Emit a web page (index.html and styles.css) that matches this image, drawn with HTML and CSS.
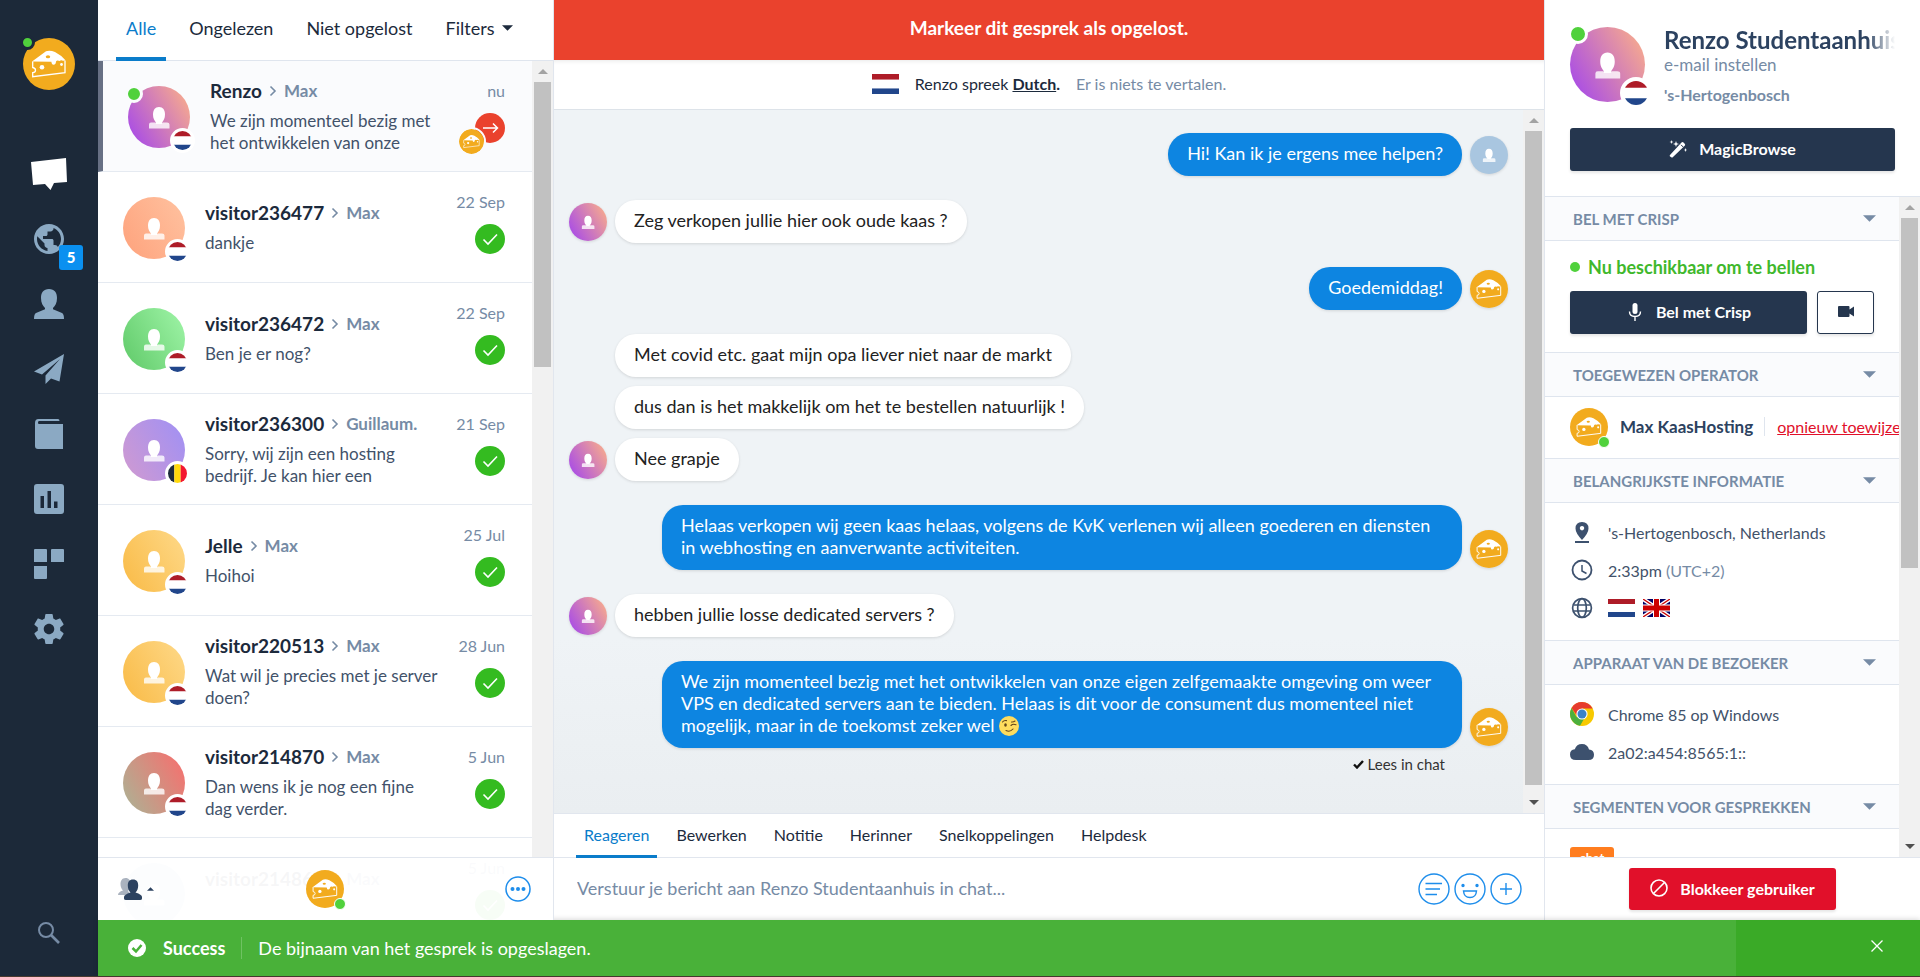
FILE: index.html
```html
<!DOCTYPE html>
<html lang="nl">
<head>
    <meta charset="UTF-8">
    <meta name="viewport" content="width=device-width, initial-scale=1.0">
    <title>Inbox</title>
    <link rel="stylesheet" href="styles.css">
</head>
<body>
    <!-- shared icons -->
    <svg class="sprite" aria-hidden="true">
        <symbol id="i-cheese" viewBox="0 0 52 52">
            <circle cx="26" cy="26" r="26" fill="#f2ab1e"/>
            <path d="M9 23.5 23 13.2Q27 11.800 32 14 38 17 42.700 22.500L40 22.700Q38 21.500 36.500 23 34 22 33 23.500 32.800 26.800 30.500 26.800 28.600 26.800 28.400 23.800z" fill="#fff"/>
            <path d="M9.700 23.400V29.500Q12.500 30 12.500 32.200 12.500 34.400 9.700 34.600V38.700L42 34.700V22.800" fill="none" stroke="#fff" stroke-width="1.300"/>
            <ellipse cx="25" cy="18.800" rx="2.200" ry="1.500" fill="#f2ab1e"/>
            <circle cx="19" cy="29.300" r="2.300" fill="#fff"/>
            <circle cx="38.500" cy="26.500" r="1.400" fill="#fff"/>
        </symbol>
        <symbol id="i-person" viewBox="0 0 62 62">
            <path d="M31 21c4 0 6 3 6 7.500 0 4-1.500 6-3 8v1.500h-6V36.500c-1.500-2-3-4-3-8C25 24 27 21 31 21z" fill="#fff"/>
            <path d="M21 42.500V38.500Q21 36.500 23 36.500H27.500Q31 39 34.500 36.500H39Q41.500 36.500 41.500 38.500V42.500z" fill="#fff" opacity=".8"/>
        </symbol>
        <symbol id="i-nl" viewBox="0 0 27 18" preserveAspectRatio="none">
            <path d="M0 0h27v18H0z" fill="#fff"/><path d="M0 0h27v5H0z" fill="#ae1c28"/><path d="M0 13h27v5H0z" fill="#21468b"/>
        </symbol>
        <symbol id="i-be" viewBox="0 0 27 18" preserveAspectRatio="none">
            <path d="M0 0h9v18H0z"/><path d="M9 0h9v18H9z" fill="#ffd90c"/><path d="M18 0h9v18h-9z" fill="#f31830"/>
        </symbol>
        <symbol id="i-check" viewBox="0 0 30 30">
            <circle cx="15" cy="15" r="15" fill="#34bb20"/>
            <path d="M8.500 15.500 13 20 22 10.500" fill="none" stroke="#fff" stroke-width="1.600"/>
        </symbol>
        <symbol id="i-caret" viewBox="0 0 12 6"><path d="M0 0h12L6 6z" fill="currentColor"/></symbol>
        <symbol id="i-gt" viewBox="0 0 8 12"><path d="M1.500 1.500 6 6 1.500 10.500" fill="none" stroke="currentColor" stroke-width="1.600"/></symbol>
    </svg>

    <div class="app">
        <nav class="sidebar">
            <a href="#" class="me" aria-label="Account">
                <svg><use href="#i-cheese"/></svg>
                <span class="dot"></span>
            </a>
            <ul class="menu">
                <li><a href="#" class="active" aria-label="Inbox"><svg viewBox="0 0 36 32"><path d="M0 4 35 0 36 24 23 25 19.500 32 14 26 2 27z"/></svg></a></li>
                <li><a href="#" aria-label="Bezoekers"><svg viewBox="2 2 20 20"><path d="M12 2C6.480 2 2 6.480 2 12s4.480 10 10 10 10-4.480 10-10S17.520 2 12 2zm-1 17.930c-3.950-.49-7-3.850-7-7.930 0-.62.080-1.210.21-1.790L9 15v1c0 1.100.9 2 2 2v1.930zm6.900-2.540c-.26-.81-1-1.390-1.900-1.390h-1v-3c0-.55-.45-1-1-1H8v-2h2c.55 0 1-.45 1-1V7h2c1.100 0 2-.9 2-2v-.41c2.930 1.190 5 4.060 5 7.410 0 2.080-.8 3.970-2.100 5.390z"/></svg><span class="badge">5</span></a></li>
                <li><a href="#" aria-label="Contacten"><svg viewBox="0 0 30 30"><path d="M15 0c5.500 0 8 3.500 8 9 0 5-2 8-4 10v1.200L28 24q2 1 2 6H0q0-5 2-6l9-3.800V19c-2-2-4-5-4-10 0-5.500 2.500-9 8-9z"/></svg></a></li>
                <li><a href="#" aria-label="Campagnes"><svg viewBox="0 0 30 30"><path d="M30 0 25.500 27.500 17 24.500 11.500 30V21.500L26 5 8 20.500 0 17.500z"/></svg></a></li>
                <li><a href="#" aria-label="Helpdesk"><svg viewBox="0 0 30 30"><path d="M4.500 0H24q1.500 0 1.500 2H5q-1 0-1 1.500T5 5H29V30H4Q1 30 1 27V4Q1 0 4.500 0z"/></svg></a></li>
                <li><a href="#" aria-label="Statistieken"><svg viewBox="0 0 30 30"><path fill-rule="evenodd" d="M3 0H27Q30 0 30 3V27Q30 30 27 30H3Q0 30 0 27V3Q0 0 3 0zM6.500 12V24H10V12zM13.500 7V24H17V7zM20 17.500V24H23.500V17.500z"/></svg></a></li>
                <li><a href="#" aria-label="Plugins"><svg viewBox="0 0 30 30"><path d="M1 0h11q1 0 1 1v12H0V1q0-1 1-1zM18 0h11q1 0 1 1v12H17V1q0-1 1-1zM0 17h13v12q0 1-1 1H1q-1 0-1-1z"/></svg></a></li>
                <li><a href="#" aria-label="Instellingen"><svg viewBox="2 2 20 20"><path d="M19.430 12.980c.04-.32.070-.64.070-.98s-.03-.66-.07-.98l2.110-1.650c.19-.15.24-.42.120-.64l-2-3.460c-.12-.22-.39-.3-.61-.22l-2.490 1c-.52-.4-1.080-.73-1.690-.98l-.38-2.650C14.460 2.180 14.250 2 14 2h-4c-.25 0-.46.18-.49.42l-.38 2.650c-.61.25-1.170.59-1.690.98l-2.490-1c-.23-.09-.49 0-.61.22l-2 3.460c-.13.22-.07.49.12.64l2.110 1.650c-.04.32-.07.65-.07.98s.03.66.07.98l-2.110 1.650c-.19.15-.24.42-.12.64l2 3.460c.12.22.39.3.61.22l2.490-1c.52.4 1.080.73 1.690.98l.38 2.650c.03.24.24.42.49.42h4c.25 0 .46-.18.49-.42l.38-2.650c.61-.25 1.170-.59 1.690-.98l2.490 1c.23.09.49 0 .61-.22l2-3.460c.12-.22.070-.49-.12-.64l-2.110-1.650zM12 15.500c-1.930 0-3.500-1.570-3.500-3.500s1.570-3.500 3.500-3.500 3.500 1.570 3.500 3.500-1.570 3.500-3.500 3.500z"/></svg></a></li>
            </ul>
            <a href="#" class="search" aria-label="Zoeken"><svg viewBox="0 0 22 22"><circle cx="8" cy="8" r="7" fill="none" stroke="currentColor" stroke-width="2"/><path d="M13 13 21 21" stroke="currentColor" stroke-width="2.600"/></svg></a>
        </nav>

        <div class="content">
            <section class="inbox">
                <div class="filters">
                    <a href="#" class="active">Alle</a>
                    <a href="#">Ongelezen</a>
                    <a href="#">Niet opgelost</a>
                    <a href="#">Filters <svg class="caret"><use href="#i-caret"/></svg></a>
                </div>
                <div class="scroll-area">
                    <ul class="conversations">
                        <li class="conversation selected">
                            <div class="avatar renzo"><svg><use href="#i-person"/></svg><span class="dot"></span><svg class="flag"><use href="#i-nl"/></svg></div>
                            <div class="preview">
                                <h3>Renzo <svg><use href="#i-gt"/></svg> <span>Max</span></h3>
                                <p>We zijn momenteel bezig met het ontwikkelen van onze</p>
                            </div>
                            <div class="meta">
                                <time>nu</time>
                                <div class="pending">
                                    <svg class="state" viewBox="0 0 30 30"><circle cx="15" cy="15" r="15" fill="#ea422d"/><path d="M8 15H22M18 10.500 22.500 15 18 19.500" fill="none" stroke="#fff" stroke-width="1.500"/></svg>
                                    <svg class="operator"><use href="#i-cheese"/></svg>
                                </div>
                            </div>
                        </li>
                        <li class="conversation">
                            <div class="avatar peach"><svg><use href="#i-person"/></svg><svg class="flag"><use href="#i-nl"/></svg></div>
                            <div class="preview">
                                <h3>visitor236477 <svg><use href="#i-gt"/></svg> <span>Max</span></h3>
                                <p>dankje</p>
                            </div>
                            <div class="meta"><time>22 Sep</time><svg class="state"><use href="#i-check"/></svg></div>
                        </li>
                        <li class="conversation">
                            <div class="avatar green"><svg><use href="#i-person"/></svg><svg class="flag"><use href="#i-nl"/></svg></div>
                            <div class="preview">
                                <h3>visitor236472 <svg><use href="#i-gt"/></svg> <span>Max</span></h3>
                                <p>Ben je er nog?</p>
                            </div>
                            <div class="meta"><time>22 Sep</time><svg class="state"><use href="#i-check"/></svg></div>
                        </li>
                        <li class="conversation">
                            <div class="avatar purple"><svg><use href="#i-person"/></svg><svg class="flag"><use href="#i-be"/></svg></div>
                            <div class="preview">
                                <h3>visitor236300 <svg><use href="#i-gt"/></svg> <span>Guillaum.</span></h3>
                                <p>Sorry, wij zijn een hosting bedrijf. Je kan hier een</p>
                            </div>
                            <div class="meta"><time>21 Sep</time><svg class="state"><use href="#i-check"/></svg></div>
                        </li>
                        <li class="conversation">
                            <div class="avatar yellow"><svg><use href="#i-person"/></svg><svg class="flag"><use href="#i-nl"/></svg></div>
                            <div class="preview">
                                <h3>Jelle <svg><use href="#i-gt"/></svg> <span>Max</span></h3>
                                <p>Hoihoi</p>
                            </div>
                            <div class="meta"><time>25 Jul</time><svg class="state"><use href="#i-check"/></svg></div>
                        </li>
                        <li class="conversation">
                            <div class="avatar yellow"><svg><use href="#i-person"/></svg><svg class="flag"><use href="#i-nl"/></svg></div>
                            <div class="preview">
                                <h3>visitor220513 <svg><use href="#i-gt"/></svg> <span>Max</span></h3>
                                <p>Wat wil je precies met je server doen?</p>
                            </div>
                            <div class="meta"><time>28 Jun</time><svg class="state"><use href="#i-check"/></svg></div>
                        </li>
                        <li class="conversation">
                            <div class="avatar red"><svg><use href="#i-person"/></svg><svg class="flag"><use href="#i-nl"/></svg></div>
                            <div class="preview">
                                <h3>visitor214870 <svg><use href="#i-gt"/></svg> <span>Max</span></h3>
                                <p>Dan wens ik je nog een fijne dag verder.</p>
                            </div>
                            <div class="meta"><time>5 Jun</time><svg class="state"><use href="#i-check"/></svg></div>
                        </li>
                        <li class="conversation">
                            <div class="avatar blue"><svg><use href="#i-person"/></svg></div>
                            <div class="preview">
                                <h3>visitor214867 <svg><use href="#i-gt"/></svg> <span>Max</span></h3>
                                <p>&nbsp;</p>
                            </div>
                            <div class="meta"><time>5 Jun</time><svg class="state"><use href="#i-check"/></svg></div>
                        </li>
                    </ul>
                    <div class="scrollbar inbox-bar"><i class="up"></i><div class="thumb"></div></div>
                </div>
                <footer class="inbox-footer">
                    <button type="button" class="people" aria-label="Operators">
                        <svg viewBox="0 0 24 22"><path d="M7.500 0c3.500 0 5 2.500 5 6s-1 5.500-2.500 7l3 4H0q0-3 5-4.500C3.500 11 2.500 9 2.500 6s1.500-6 5-6z" opacity=".4"/><path d="M15 1.500c3.700 0 5.200 2.300 5.200 6 0 3.300-1.200 5.500-2.700 7Q24 16.500 24 19v1.500Q24 22 22 22H8q-2 0-2-1.500V19q0-2.500 6.500-4.500c-1.500-1.500-2.700-3.700-2.700-7 0-3.700 1.500-6 5.200-6z"/></svg>
                        <svg class="caret-up"><use href="#i-caret"/></svg>
                    </button>
                    <div class="op-avatar"><svg><use href="#i-cheese"/></svg><span class="dot"></span></div>
                    <button type="button" class="more" aria-label="Meer">
                        <svg viewBox="0 0 26 26"><circle cx="13" cy="13" r="12" fill="none" stroke="currentColor" stroke-width="1.500"/><circle cx="7.500" cy="13" r="2"/><circle cx="13" cy="13" r="2"/><circle cx="18.500" cy="13" r="2"/></svg>
                    </button>
                </footer>
            </section>

            <main class="chat">
                <button type="button" class="resolve">Markeer dit gesprek als opgelost.</button>
                <div class="language">
                    <svg><use href="#i-nl"/></svg>
                    <p>Renzo spreek <a href="#">Dutch</a><b>.</b></p>
                    <p class="muted">Er is niets te vertalen.</p>
                </div>
                <div class="scroll-area">
                    <div class="messages">
                        <div class="message out"><p>Hi! Kan ik je ergens mee helpen?</p><div class="face grey"><svg><use href="#i-person"/></svg></div></div>
                        <div class="message in"><div class="face renzo"><svg><use href="#i-person"/></svg></div><p>Zeg verkopen jullie hier ook oude kaas ?</p></div>
                        <div class="message out"><p>Goedemiddag!</p><div class="face"><svg><use href="#i-cheese"/></svg></div></div>
                        <div class="group">
                            <div class="message in"><div class="face none"></div><p>Met covid etc. gaat mijn opa liever niet naar de markt</p></div>
                            <div class="message in"><div class="face none"></div><p>dus dan is het makkelijk om het te bestellen natuurlijk !</p></div>
                            <div class="message in"><div class="face renzo"><svg><use href="#i-person"/></svg></div><p>Nee grapje</p></div>
                        </div>
                        <div class="message out"><p>Helaas verkopen wij geen kaas helaas, volgens de KvK verlenen wij alleen goederen en diensten in webhosting en aanverwante activiteiten.</p><div class="face"><svg><use href="#i-cheese"/></svg></div></div>
                        <div class="message in"><div class="face renzo"><svg><use href="#i-person"/></svg></div><p>hebben jullie losse dedicated servers ?</p></div>
                        <div class="message out"><p>We zijn momenteel bezig met het ontwikkelen van onze eigen zelfgemaakte omgeving om weer VPS en dedicated servers aan te bieden. Helaas is dit voor de consument dus momenteel niet mogelijk, maar in de toekomst zeker wel <svg class="emoji" viewBox="0 0 20 20" role="img" aria-label="knipoog"><circle cx="10" cy="10" r="10" fill="#ffdc5d"/><ellipse cx="6.500" cy="9" rx="1.300" ry="1.800" fill="#65471b"/><path d="M12 9.500Q14 7.500 17 8.800M3.500 6Q5 4 7.500 4.600M12.500 6Q14.500 6.200 16 5M7 14.500Q11 16.500 14 13" fill="none" stroke="#65471b" stroke-width="1.100" stroke-linecap="round"/></svg></p><div class="face"><svg><use href="#i-cheese"/></svg></div></div>
                        <div class="receipt"><svg viewBox="0 0 11 9"><path d="M1 4.500 4 7.500 10 1" fill="none" stroke="currentColor" stroke-width="2.400"/></svg> Lees in chat</div>
                    </div>
                    <div class="scrollbar chat-bar"><i class="up"></i><div class="thumb"></div><i class="down"></i></div>
                </div>
                <div class="reply-tabs">
                    <a href="#" class="active">Reageren</a>
                    <a href="#">Bewerken</a>
                    <a href="#">Notitie</a>
                    <a href="#">Herinner</a>
                    <a href="#">Snelkoppelingen</a>
                    <a href="#">Helpdesk</a>
                </div>
                <form class="composer">
                    <input type="text" aria-label="Bericht" placeholder="Verstuur je bericht aan Renzo Studentaanhuis in chat...">
                    <button type="button" aria-label="Snelkoppelingen"><svg viewBox="0 0 32 32"><circle cx="16" cy="16" r="15"/><path d="M7.500 10.500H24M7.500 16H22M7.500 21.500H19" /></svg></button>
                    <button type="button" aria-label="Emoji"><svg viewBox="0 0 32 32"><circle cx="16" cy="16" r="15"/><path d="M9.500 18H22.500Q22 24.500 16 24.500T9.500 18z"/><circle cx="9" cy="12.500" r="1" fill="currentColor"/><circle cx="23" cy="12.500" r="1" fill="currentColor"/></svg></button>
                    <button type="button" aria-label="Bestand"><svg viewBox="0 0 32 32"><circle cx="16" cy="16" r="15"/><path d="M10 16H22M16 10V22"/></svg></button>
                </form>
            </main>

            <aside class="profile">
                <header class="visitor">
                    <div class="who">
                        <div class="avatar large renzo"><svg><use href="#i-person"/></svg><span class="dot"></span><svg class="flag"><use href="#i-nl"/></svg></div>
                        <div class="who-text">
                            <h2>Renzo Studentaanhuis</h2>
                            <p>e-mail instellen</p>
                            <p class="city">'s-Hertogenbosch</p>
                        </div>
                    </div>
                    <button type="button" class="btn dark">
                        <svg viewBox="0 0 18 18"><path d="M1 15 12.500 2.500Q13.500 1.500 14.500 2.500L15.700 3.700Q16.700 4.700 15.700 5.700L4 17Q3 18 2 17L1 16.500Q.3 15.700 1 15z"/><path d="M12 4.800 14.200 7" stroke="#25364e" stroke-width="1"/><path d="M7 1 7.800 3.200 10 4 7.800 4.800 7 7 6.200 4.800 4 4 6.200 3.200zM2.500 0 3 1.500 4.500 2 3 2.500 2.500 4 2 2.500.5 2 2 1.500zM16.500 8 17 9.500 18 10 17 10.500 16.500 12 16 10.500 15 10 16 9.500z"/></svg>
                        MagicBrowse
                    </button>
                </header>
                <div class="scroll-area">
                    <div class="details">
                        <h4>BEL MET CRISP <svg><use href="#i-caret"/></svg></h4>
                        <div class="panel call">
                            <p class="available"><span class="dot"></span>Nu beschikbaar om te bellen</p>
                            <div class="call-buttons">
                                <button type="button" class="btn dark"><svg viewBox="0 0 18 18"><rect x="6.500" y="0" width="5" height="11" rx="2.500"/><path d="M3.500 8.500Q3.500 13.500 9 13.500T14.500 8.500M9 13.500V18" fill="none" stroke="currentColor" stroke-width="1.400"/></svg> Bel met Crisp</button>
                                <button type="button" class="btn outline" aria-label="Video"><svg viewBox="0 0 16 11"><path d="M1 0h9.500q1 0 1 1v2.500L16 .5v10L11.500 7.500V10q0 1-1 1H1q-1 0-1-1V1q0-1 1-1z"/></svg></button>
                            </div>
                        </div>
                        <h4>TOEGEWEZEN OPERATOR <svg><use href="#i-caret"/></svg></h4>
                        <div class="panel assigned">
                            <div class="op-avatar"><svg><use href="#i-cheese"/></svg><span class="dot"></span></div>
                            <b>Max KaasHosting</b>
                            <a href="#">opnieuw toewijzen</a>
                        </div>
                        <h4>BELANGRIJKSTE INFORMATIE <svg><use href="#i-caret"/></svg></h4>
                        <ul class="panel info">
                            <li><svg viewBox="0 0 24 24"><path fill-rule="evenodd" d="M12 2q6.500 0 6.500 6.500Q18.500 13 12 20 5.500 13 5.500 8.500 5.500 2 12 2zM12 6a2.200 2.200 0 1 0 .01 0zM5 21h14v2H5z"/></svg>'s-Hertogenbosch, Netherlands</li>
                            <li><svg viewBox="0 0 24 24"><circle cx="12" cy="12" r="9.500" fill="none" stroke="currentColor" stroke-width="1.800"/><path d="M12 7V13L16.500 15.500" fill="none" stroke="currentColor" stroke-width="1.500"/></svg>2:33pm <span>(UTC+2)</span></li>
                            <li><svg viewBox="0 0 24 24"><g fill="none" stroke="currentColor" stroke-width="1.700"><circle cx="12" cy="12" r="9.400"/><ellipse cx="12" cy="12" rx="4.300" ry="9.400"/><path d="M3.500 9H20.500M3.500 15H20.500"/></g></svg>
                                <svg class="lang"><use href="#i-nl"/></svg>
                                <svg class="lang" viewBox="0 0 27 18" preserveAspectRatio="none"><path d="M0 0h27v18H0z" fill="#006"/><path d="M0 0 27 18M27 0 0 18" stroke="#fff" stroke-width="4"/><path d="M0 0 27 18M27 0 0 18" stroke="#c00" stroke-width="1.300"/><path d="M13.500 0V18M0 9H27" stroke="#fff" stroke-width="7"/><path d="M13.500 0V18M0 9H27" stroke="#c00" stroke-width="5"/></svg>
                            </li>
                        </ul>
                        <h4>APPARAAT VAN DE BEZOEKER <svg><use href="#i-caret"/></svg></h4>
                        <ul class="panel info device">
                            <li><svg viewBox="0 0 24 24"><circle cx="12" cy="12" r="12" fill="#f7c900"/><path d="M12 12 6.500 15 1.600 6A12 12 0 0 0 10 23.800L16 13.500z" fill="#4caf3d"/><path d="M12 12 6.500 13 1.600 6A12 12 0 0 1 22.600 6.500H12z" fill="#e63b2e"/><circle cx="12" cy="12" r="5.600" fill="#fff"/><circle cx="12" cy="12" r="4.500" fill="#3b82c9"/></svg>Chrome 85 op Windows</li>
                            <li><svg viewBox="0 0 24 24"><path d="M6 20Q0 20 0 14.500 0 9.800 4.800 9.300 6.500 4 12 4q5.500 0 7 5.500 5 .5 5 5.300 0 5.200-5.500 5.200z"/></svg>2a02:a454:8565:1::</li>
                        </ul>
                        <h4>SEGMENTEN VOOR GESPREKKEN <svg><use href="#i-caret"/></svg></h4>
                        <div class="panel segments"><span class="tag">chat</span></div>
                    </div>
                    <div class="scrollbar profile-bar"><i class="up"></i><div class="thumb"></div><i class="down"></i></div>
                </div>
                <footer class="block">
                    <button type="button" class="btn red"><svg viewBox="0 0 18 18"><g fill="none" stroke="currentColor" stroke-width="1.600"><circle cx="9" cy="9" r="8"/><path d="M3.500 14.500 14.500 3.500"/></g></svg> Blokkeer gebruiker</button>
                </footer>
            </aside>
        </div>

        <div class="toast" role="status">
            <svg class="ok" viewBox="0 0 18 18"><circle cx="9" cy="9" r="9" fill="#fff"/><path d="M4.500 9 8 12.500 13.500 6" fill="none" stroke="#49b139" stroke-width="2.500"/></svg>
            <strong>Success</strong>
            <span>De bijnaam van het gesprek is opgeslagen.</span>
            <button type="button" aria-label="Sluiten"><svg viewBox="0 0 12 12"><path d="M.5.5 11.500 11.500M11.500.5.5 11.500" stroke="currentColor" stroke-width="1.300"/></svg></button>
        </div>
    </div>
</body>
</html>
```

FILE: styles.css
```css
* {
    box-sizing: border-box;
}
body {
    margin: 0;
    background: #4a3a30;
    font-family: Lato, "Liberation Sans", sans-serif;
    font-size: 17px;
    color: #1c2a3c;
}
h2, h3, h4, p, ul {
    margin: 0;
    padding: 0;
    list-style: none;
}
a {
    color: inherit;
    text-decoration: none;
}
button, input {
    font-family: inherit;
    border: none;
    background: none;
    padding: 0;
}
button {
    cursor: pointer;
}
svg {
    display: block;
    flex-shrink: 0;
    fill: currentColor;
}
.sprite {
    position: absolute;
    width: 0;
    height: 0;
}

/* layout */
.app {
    display: grid;
    grid-template-columns: 98px 1fr;
    grid-template-rows: minmax(0, 1fr) 56px;
    height: 100vh;
    padding-bottom: 1px;
    overflow: hidden;
}
.content {
    display: grid;
    grid-template-columns: 456px minmax(0, 1fr) 376px;
    grid-template-rows: minmax(0, 1fr);
    background: #ffffff;
}
.scroll-area {
    display: flex;
    flex: 1;
    min-height: 0;
    overflow: hidden;
}
.dot {
    display: block;
    background: #50d13c;
    border-radius: 50%;
}

/* scrollbars */
.scrollbar {
    display: flex;
    flex-direction: column;
    align-items: center;
    flex: 0 0 21px;
    background: #f1f1f1;
}
.scrollbar i {
    height: 21px;
    flex-shrink: 0;
    display: flex;
    align-items: center;
}
.scrollbar i::before {
    content: "";
    border: 5px solid transparent;
    border-top: 0;
    border-bottom-color: #a3a3a3;
}
.scrollbar .down {
    margin-top: auto;
}
.scrollbar .down::before {
    border-top: 5px solid #505050;
    border-bottom: 0;
}
.thumb {
    width: 17px;
    background: #c1c1c1;
}
.inbox-bar .thumb {
    height: 285px;
}
.chat-bar .thumb {
    flex: 1;
    margin-bottom: 7px;
}
.profile-bar .thumb {
    height: 53%;
}

/* sidebar */
.sidebar {
    grid-row: 1 / 3;
    display: flex;
    flex-direction: column;
    align-items: center;
    background: #1c2939;
    padding: 38px 0 32px;
}
.me {
    position: relative;
    margin-bottom: 51px;
}
.me svg {
    width: 52px;
    height: 52px;
}
.me .dot {
    position: absolute;
    top: -3px;
    left: -3px;
    width: 15px;
    height: 15px;
    border: 3px solid #1c2939;
}
.menu a {
    position: relative;
    display: flex;
    align-items: center;
    justify-content: center;
    width: 98px;
    height: 65px;
    color: #8ba9c3;
}
.menu svg {
    width: 30px;
    height: 30px;
}
.menu .active {
    color: #ffffff;
}
.menu .active svg {
    width: 36px;
    height: 32px;
}
.badge {
    position: absolute;
    left: 59px;
    top: 39px;
    width: 24px;
    height: 25px;
    border-radius: 3px;
    background: #0a90f0;
    color: #ffffff;
    font-size: 15px;
    font-weight: 900;
    line-height: 25px;
    text-align: center;
}
.search {
    margin-top: auto;
    color: #768ba5;
}
.search svg {
    width: 22px;
    height: 22px;
}

/* avatars */
.avatar {
    position: relative;
    width: 62px;
    height: 62px;
    border-radius: 50%;
    flex-shrink: 0;
}
.avatar svg {
    width: 100%;
    height: 100%;
}
.avatar .dot {
    position: absolute;
    top: -1px;
    left: -3px;
    width: 18px;
    height: 18px;
    border: 3px solid #fafbfd;
}
.avatar .flag {
    position: absolute;
    right: -5px;
    bottom: -5px;
    width: 25px;
    height: 25px;
    border: 3px solid #ffffff;
    border-radius: 50%;
    background: #ffffff;
}
.avatar.large {
    width: 75px;
    height: 75px;
}
.large .flag {
    width: 32px;
    height: 32px;
    border-width: 4px;
    right: -7px;
    bottom: -7px;
}
.large .dot {
    width: 20px;
    height: 20px;
    top: -3px;
    left: -2px;
    border-color: #ffffff;
}
.renzo {
    background: linear-gradient(60deg, #a548ea 5%, #f5a890 90%);
}
.peach {
    background: linear-gradient(60deg, #fea27c, #ffc2a0);
}
.green {
    background: linear-gradient(60deg, #5fc968, #a0f5a8);
}
.purple {
    background: linear-gradient(60deg, #d19ad0, #9f90f5);
}
.yellow {
    background: linear-gradient(60deg, #f9ba45, #fed989);
}
.avatar.red {
    background: linear-gradient(60deg, #a9b596, #fa6c6c);
}
.blue {
    background: #a9c6e0;
}

/* inbox */
.inbox {
    position: relative;
    display: flex;
    flex-direction: column;
    min-height: 0;
    border-right: 1px solid #e1e6ee;
}
.filters {
    display: flex;
    gap: 13px;
    height: 61px;
    padding-left: 18px;
    border-bottom: 1px solid #dfe5ee;
    font-size: 18px;
    flex-shrink: 0;
}
.filters a {
    display: flex;
    align-items: center;
    gap: 7px;
    height: 61px;
    padding: 0 10px 2px;
    border-bottom: 4px solid transparent;
}
.filters .active {
    color: #0a7cca;
    border-color: #0a7cca;
}
.caret {
    width: 11px;
    height: 6px;
}
.conversations {
    flex: 1;
    min-width: 0;
}
.conversation {
    display: flex;
    align-items: center;
    height: 111px;
    padding: 2px 27px 0 25px;
    border-bottom: 1px solid #e5eaf1;
}
.selected {
    background: #fafbfd;
    border-left: 5px solid #677084;
}
.preview {
    flex: 1;
    min-width: 0;
    margin-left: 20px;
}
.preview h3 {
    display: flex;
    align-items: center;
    gap: 7px;
    margin-bottom: 8px;
    font-size: 19px;
    line-height: 22px;
    white-space: nowrap;
}
.preview h3 svg {
    width: 8px;
    height: 12px;
    color: #768ba5;
}
.preview h3 span {
    color: #768ba5;
    font-size: 17px;
}
.preview p {
    max-width: 238px;
    color: #42526a;
    line-height: 22px;
}
.meta {
    display: flex;
    flex-direction: column;
    align-items: flex-end;
    gap: 11px;
    width: 60px;
    height: 74px;
    line-height: 22px;
    margin-left: -4px;
}
.meta time {
    color: #768ba5;
    font-size: 16px;
}
.state {
    width: 30px;
    height: 30px;
}
.pending {
    position: relative;
}
.operator {
    position: absolute;
    left: -18px;
    top: 14px;
    width: 29px;
    height: 29px;
    border: 2px solid #fafbfd;
    border-radius: 50%;
}
.inbox-bar {
    height: calc(100% - 63px);
}
.inbox-footer {
    position: absolute;
    left: 0;
    right: 0;
    bottom: 0;
    height: 63px;
    display: grid;
    grid-template-columns: 1fr auto 1fr;
    align-items: center;
    padding: 0 22px 0 20px;
    background: rgba(255, 255, 255, 0.96);
    border-top: 1px solid #e1e6ee;
}
.people {
    display: flex;
    align-items: center;
    gap: 5px;
    color: #2c4260;
}
.people svg {
    width: 24px;
    height: 22px;
}
.people .caret-up {
    width: 7px;
    height: 4px;
    transform: rotate(180deg);
}
.op-avatar {
    position: relative;
}
.op-avatar svg {
    width: 38px;
    height: 38px;
}
.op-avatar .dot {
    position: absolute;
    right: -2px;
    bottom: -2px;
    width: 12px;
    height: 12px;
    border: 1px solid #ffffff;
}
.more {
    justify-self: end;
    color: #1d8deb;
}
.more svg {
    width: 26px;
    height: 26px;
}

/* chat */
.chat {
    display: flex;
    flex-direction: column;
    min-height: 0;
}
.resolve {
    height: 60px;
    padding-bottom: 5px;
    background: #ea422d;
    color: #ffffff;
    font-size: 19px;
    font-weight: bold;
    flex-shrink: 0;
}
.language {
    display: flex;
    align-items: center;
    justify-content: center;
    gap: 16px;
    height: 50px;
    padding-bottom: 2px;
    border-bottom: 1px solid #dde3e9;
    font-size: 16px;
    flex-shrink: 0;
    box-shadow: inset 0 4px 4px -3px #e8e8e8;
}
.language svg {
    width: 27px;
    height: 20px;
}
.language a {
    font-weight: bold;
    text-decoration: underline;
}
.language .muted {
    color: #768ba5;
}
.messages {
    flex: 1;
    display: flex;
    flex-direction: column;
    gap: 24px;
    padding: 23px 15px 0 15px;
    background: linear-gradient(#eff3f6 75%, #eaeef1);
}
.group {
    display: flex;
    flex-direction: column;
    gap: 9px;
}
.message {
    display: flex;
    align-items: flex-end;
    gap: 8px;
}
.message p {
    max-width: 800px;
    padding: 9px 19px 12px;
    border-radius: 21px;
    font-size: 18px;
    line-height: 22px;
    background: #ffffff;
    color: #222222;
    box-shadow: 0 1px 3px rgba(0, 0, 0, 0.12);
}
.out {
    justify-content: flex-end;
}
.message.out p {
    background: #0d85e1;
    color: #ffffff;
}
.emoji {
    display: inline-block;
    width: 20px;
    height: 20px;
    vertical-align: -4px;
}
.face {
    width: 38px;
    height: 38px;
    margin-bottom: 2px;
    border-radius: 50%;
    flex-shrink: 0;
    box-shadow: 0 1px 3px rgba(0, 0, 0, 0.12);
}
.face svg {
    width: 38px;
    height: 38px;
}
.face.grey {
    background: #a9c6e0;
}
.face.none {
    box-shadow: none;
}
.receipt {
    display: flex;
    align-items: center;
    justify-content: flex-end;
    gap: 4px;
    margin-top: -18px;
    padding-right: 63px;
    font-size: 15px;
    line-height: 20px;
    color: #333333;
}
.receipt svg {
    width: 11px;
    height: 9px;
    color: #111111;
}
.reply-tabs {
    display: flex;
    gap: 11px;
    height: 45px;
    padding-left: 22px;
    border-top: 1px solid #e1e6ee;
    border-bottom: 1px solid #e1e6ee;
    font-size: 16px;
    flex-shrink: 0;
}
.reply-tabs a {
    display: flex;
    align-items: center;
    height: 44px;
    padding: 0 8px 1px;
    border-bottom: 3px solid transparent;
}
.reply-tabs .active {
    color: #0a7cca;
    border-color: #0a7cca;
}
.composer {
    display: flex;
    align-items: center;
    gap: 4px;
    height: 62px;
    padding: 0 22px 0 23px;
    flex-shrink: 0;
}
.composer input {
    flex: 1;
    height: 40px;
    padding-bottom: 2px;
    font-size: 18px;
    outline: none;
}
.composer input::placeholder {
    color: #768ba5;
}
.composer button {
    color: #1d8deb;
}
.composer svg {
    width: 32px;
    height: 32px;
    fill: none;
    stroke: currentColor;
    stroke-width: 1.4px;
}

/* profile */
.profile {
    display: flex;
    flex-direction: column;
    min-height: 0;
    border-left: 1px solid #e1e6ee;
}
.visitor {
    height: 197px;
    padding: 27px 25px 0;
    border-bottom: 1px solid #dfe5ee;
    flex-shrink: 0;
}
.who {
    display: flex;
    gap: 19px;
    height: 75px;
    margin-bottom: 26px;
}
.who-text {
    flex: 1;
    min-width: 0;
    color: #768ba5;
}
.who h2 {
    overflow: hidden;
    font-size: 24px;
    line-height: 26px;
    white-space: nowrap;
    color: #2c4260;
    -webkit-mask-image: linear-gradient(90deg, #000000 88%, transparent);
    mask-image: linear-gradient(90deg, #000000 88%, transparent);
}
.who p {
    line-height: 24px;
}
.who .city {
    margin-top: 6px;
    font-size: 16px;
    font-weight: bold;
}
.btn {
    display: flex;
    align-items: center;
    justify-content: center;
    gap: 12px;
    height: 43px;
    padding-bottom: 2px;
    border-radius: 3px;
    font-size: 16px;
    font-weight: bold;
    box-shadow: 0 2px 3px rgba(0, 0, 0, 0.1);
}
.btn svg {
    width: 18px;
    height: 18px;
}
.dark {
    width: 100%;
    background: #25364e;
    color: #ffffff;
}
.outline {
    width: 57px;
    border: 1px solid #25364e;
    color: #25364e;
    flex-shrink: 0;
}
.outline svg {
    width: 16px;
    height: 11px;
}
.btn.red {
    padding: 0 21px 2px;
    height: 42px;
    background: #e1102a;
    color: #ffffff;
}
.details {
    flex: 1;
    min-width: 0;
}
.details h4 {
    display: flex;
    align-items: center;
    justify-content: space-between;
    height: 45px;
    padding: 0 23px 0 28px;
    border-top: 1px solid #dfe5ee;
    border-bottom: 1px solid #dfe5ee;
    background: #fafbfd;
    color: #768ba5;
    font-size: 15px;
}
.details h4:first-child {
    height: 44px;
    border-top: none;
}
.details h4 svg {
    width: 13px;
    height: 7px;
}
.panel {
    padding: 0 25px;
}
.call {
    height: 111px;
    padding-top: 15px;
}
.available {
    display: flex;
    align-items: center;
    gap: 8px;
    margin-bottom: 13px;
    color: #3fb82c;
    font-size: 18px;
    font-weight: bold;
    line-height: 22px;
}
.available .dot {
    width: 10px;
    height: 10px;
}
.call-buttons {
    display: flex;
    gap: 10px;
}
.assigned {
    display: flex;
    align-items: center;
    height: 61px;
    padding-right: 0;
    padding-bottom: 2px;
    overflow: hidden;
    white-space: nowrap;
}
.assigned b {
    margin: 0 11px 0 12px;
    color: #2c4260;
}
.assigned a {
    padding-left: 12px;
    border-left: 1px solid #dfe5ee;
    color: #e1102a;
    font-size: 16px;
    text-decoration: underline;
}
.info {
    display: flex;
    flex-direction: column;
    gap: 14px;
    height: 137px;
    padding-top: 17px;
    font-size: 16px;
    color: #42526a;
}
.info li {
    display: flex;
    align-items: center;
    height: 24px;
    gap: 8px;
}
.info li > svg:first-child {
    width: 24px;
    height: 24px;
    margin-right: 6px;
    color: #3d516e;
}
.info span {
    color: #768ba5;
    margin-left: -4px;
}
.info .lang {
    width: 27px;
    height: 18px;
}
.device {
    height: 99px;
}
.segments {
    height: 60px;
    padding-top: 18px;
}
.tag {
    display: block;
    width: 44px;
    height: 26px;
    border-radius: 3px;
    background: #ff7d1f;
    color: #ffffff;
    font-size: 13px;
    font-weight: bold;
    line-height: 22px;
    text-align: center;
}
.block {
    display: flex;
    align-items: center;
    justify-content: center;
    height: 63px;
    border-top: 1px solid #e1e6ee;
    flex-shrink: 0;
}

/* toast */
.toast {
    display: flex;
    align-items: center;
    background: #49b139;
    color: #ffffff;
    padding-left: 30px;
    font-size: 18px;
    box-shadow: 0 -1px 5px rgba(0, 0, 0, 0.15);
}
.toast .ok {
    width: 18px;
    height: 18px;
}
.toast strong {
    margin-left: 17px;
    padding-right: 16px;
    border-right: 1px solid #6fc262;
}
.toast span {
    margin-left: 16px;
}
.toast button {
    display: flex;
    align-items: center;
    justify-content: flex-end;
    width: 184px;
    height: 56px;
    margin-left: auto;
    padding: 0 37px 4px 0;
    background: #3aaa27;
    color: #ffffff;
}
.toast button svg {
    width: 12px;
    height: 12px;
}
```
